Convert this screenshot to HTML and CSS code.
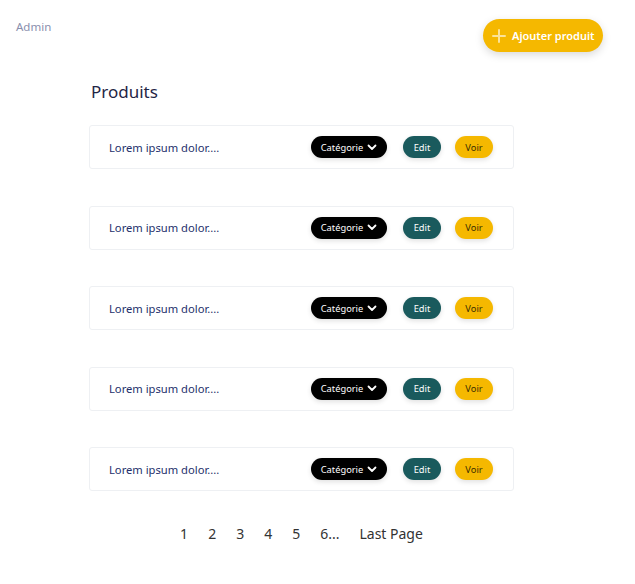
FILE: index.html
```html
<!DOCTYPE html>
<html lang="fr">
<head>
<meta charset="utf-8">
<link rel="stylesheet" href="styles.css">
</head>
<body>
<header class="topbar">
  <span class="admin">Admin</span>
  <button class="add-btn">
    <svg class="plus" width="14" height="14" viewBox="0 0 14 14"><path d="M7 1v12M1 7h12" stroke="rgba(255,255,255,0.6)" stroke-width="2" stroke-linecap="round"/></svg>
    Ajouter produit
  </button>
</header>
<main class="content">
  <h1 class="title">Produits</h1>
  <ul class="list">
    <li class="card"><span class="name">Lorem ipsum dolor....</span><div class="actions"><button class="cat">Catégorie <svg width="10" height="7" viewBox="0 0 10 7"><path d="M1.5 1.5L5 5l3.5-3.5" fill="none" stroke="#fff" stroke-width="1.8" stroke-linecap="round" stroke-linejoin="round"/></svg></button><button class="edit">Edit</button><button class="voir">Voir</button></div></li>
    <li class="card"><span class="name">Lorem ipsum dolor....</span><div class="actions"><button class="cat">Catégorie <svg width="10" height="7" viewBox="0 0 10 7"><path d="M1.5 1.5L5 5l3.5-3.5" fill="none" stroke="#fff" stroke-width="1.8" stroke-linecap="round" stroke-linejoin="round"/></svg></button><button class="edit">Edit</button><button class="voir">Voir</button></div></li>
    <li class="card"><span class="name">Lorem ipsum dolor....</span><div class="actions"><button class="cat">Catégorie <svg width="10" height="7" viewBox="0 0 10 7"><path d="M1.5 1.5L5 5l3.5-3.5" fill="none" stroke="#fff" stroke-width="1.8" stroke-linecap="round" stroke-linejoin="round"/></svg></button><button class="edit">Edit</button><button class="voir">Voir</button></div></li>
    <li class="card"><span class="name">Lorem ipsum dolor....</span><div class="actions"><button class="cat">Catégorie <svg width="10" height="7" viewBox="0 0 10 7"><path d="M1.5 1.5L5 5l3.5-3.5" fill="none" stroke="#fff" stroke-width="1.8" stroke-linecap="round" stroke-linejoin="round"/></svg></button><button class="edit">Edit</button><button class="voir">Voir</button></div></li>
    <li class="card"><span class="name">Lorem ipsum dolor....</span><div class="actions"><button class="cat">Catégorie <svg width="10" height="7" viewBox="0 0 10 7"><path d="M1.5 1.5L5 5l3.5-3.5" fill="none" stroke="#fff" stroke-width="1.8" stroke-linecap="round" stroke-linejoin="round"/></svg></button><button class="edit">Edit</button><button class="voir">Voir</button></div></li>
  </ul>
  <nav class="pager">
    <a>1</a><a>2</a><a>3</a><a>4</a><a>5</a><a>6...</a><a>Last Page</a>
  </nav>
</main>
</body>
</html>
```
FILE: styles.css
```css
* { box-sizing: border-box; }
body {
  margin: 0;
  background: #fff;
  font-family: "Noto Sans", "Open Sans", sans-serif;
  width: 635px;
  height: 584px;
  overflow: hidden;
}
.topbar {
  display: flex;
  justify-content: space-between;
  align-items: flex-start;
  padding: 19px 32px 0 16px;
  height: 80px;
}
.admin {
  font-size: 11.5px;
  color: #8a8fae;
}
.add-btn {
  display: flex;
  align-items: center;
  gap: 6px;
  height: 33px;
  width: 120px;
  padding: 0 0 0 9px;
  border: none;
  border-radius: 17px;
  background: #f5b800;
  color: #fff;
  font-family: inherit;
  font-size: 11px;
  font-weight: 600;
  box-shadow: 0 3px 8px rgba(0,0,0,0.15);
  white-space: nowrap;
}
.content {
  width: 425px;
  margin-left: 89px;
}
.title {
  margin: 0 0 22px 2px;
  font-size: 17px;
  font-weight: 400;
  color: #1f2545;
  line-height: 23px;
}
.list {
  list-style: none;
  margin: 0;
  padding: 0;
  display: flex;
  flex-direction: column;
  gap: 36.5px;
}
.card {
  height: 44px;
  border: 1px solid #eef0f3;
  border-radius: 3px;
  display: flex;
  align-items: center;
  justify-content: space-between;
  padding: 0 20px 0 19px;
}
.name {
  font-size: 11.2px;
  color: #24306b;
}
.actions {
  display: flex;
  align-items: center;
  gap: 14px;
}
.actions button {
  height: 22px;
  border: none;
  border-radius: 11px;
  font-family: inherit;
  font-size: 9.3px;
  padding: 0;
  display: flex;
  align-items: center;
  justify-content: center;
  box-shadow: 0 2px 5px rgba(0,0,0,0.12);
}
.cat {
  width: 76px;
  background: #000;
  color: #fff;
  gap: 4px;
  margin-right: 2px;
}
.edit {
  width: 38px;
  background: #1a5a5d;
  color: #fff;
}
.voir {
  width: 38px;
  background: #f5b800;
  color: #3a2e00;
}
.pager {
  display: flex;
  justify-content: center;
  gap: 20px;
  margin-top: 33px;
  font-size: 14px;
  color: #333;
}
.pager a { cursor: pointer; }
```
